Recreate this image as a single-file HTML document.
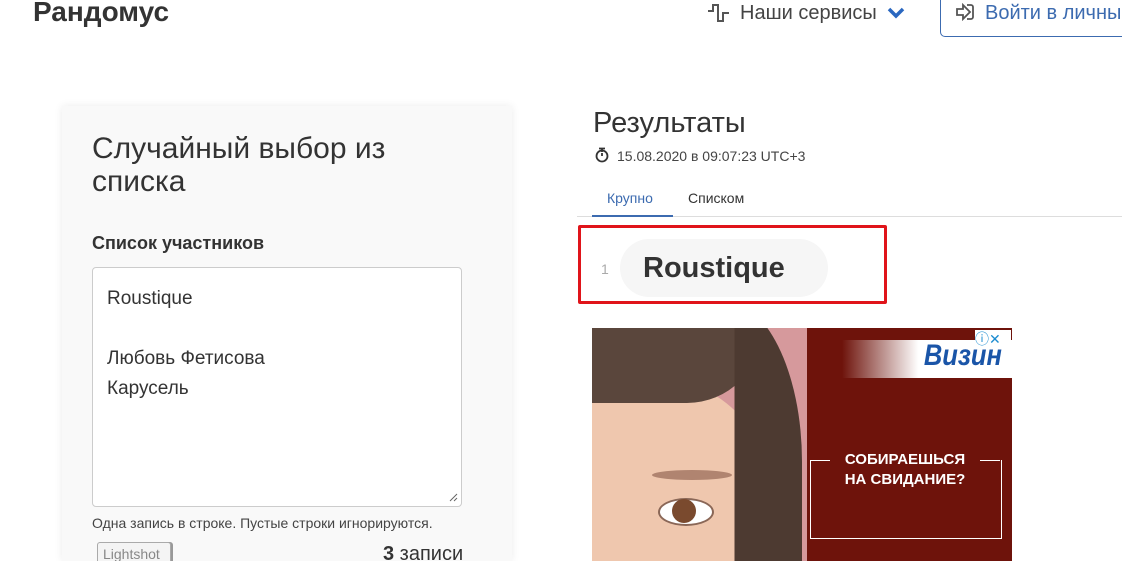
<!DOCTYPE html>
<html><head><meta charset="utf-8"><style>
html,body{margin:0;width:1122px;height:561px;overflow:hidden}
body{background:#fff;font-family:"Liberation Sans",sans-serif;color:#333;position:relative}
.a{position:absolute}
</style></head><body>
<div class="a" style="left:33px;top:-4px;font-size:28px;font-weight:bold;color:#333">Рандомус</div>
<svg class="a" style="left:707px;top:3px" width="24" height="20" viewBox="0 0 24 20"><path d="M1 8h5V2h5v16h5V10h6" fill="none" stroke="#555" stroke-width="2"/></svg>
<div class="a" style="left:740px;top:2px;font-size:20px;color:#444">Наши сервисы</div>
<svg class="a" style="left:887px;top:7px" width="18" height="12"><path d="M2 2l7 7 7-7" fill="none" stroke="#2a67c0" stroke-width="3.5"/></svg>
<div class="a" style="left:940px;top:-10px;width:200px;height:45px;border:1px solid #3c6bb0;border-radius:5px"></div>
<svg class="a" style="left:955px;top:3px" width="20" height="18"><path d="M2 6h6V2l7 7-7 7v-4H2z M12 2h4a2 2 0 0 1 2 2v10a2 2 0 0 1-2 2h-4" fill="none" stroke="#555" stroke-width="1.8"/></svg>
<div class="a" style="left:985px;top:2px;font-size:20px;color:#3c6bb0;white-space:nowrap">Войти в личный</div>

<div class="a" style="left:62px;top:106px;width:450px;height:455px;background:#f9f9f9;box-shadow:0 0 8px rgba(0,0,0,.08)"></div>
<div class="a" style="left:92px;top:132px;font-size:30px;line-height:33px;color:#333">Случайный выбор из<br>списка</div>
<div class="a" style="left:92px;top:233px;font-size:18px;font-weight:bold;color:#333">Список участников</div>
<div class="a" style="left:92px;top:267px;width:368px;height:238px;background:#fff;border:1px solid #ccc;border-radius:4px"></div>
<div class="a" style="left:107px;top:284px;font-size:19px;line-height:30px;color:#333">Roustique<br><br>Любовь Фетисова<br>Карусель</div>
<svg class="a" style="left:448px;top:492px" width="10" height="10"><path d="M9 2L2 9M9 6L6 9" stroke="#666"/></svg>
<div class="a" style="left:92px;top:515px;font-size:14px;color:#444">Одна запись в строке. Пустые строки игнорируются.</div>
<div class="a" style="left:97px;top:542px;width:72px;height:19px;border:1px solid #aaa;border-bottom:none;border-radius:3px 3px 0 0;background:#f4f4f4;box-shadow:2px 0 0 #999"></div>
<div class="a" style="left:103px;top:546px;font-size:14px;color:#888">Lightshot</div>
<div class="a" style="left:383px;top:543px;font-size:20px;color:#333"><b>3</b> записи</div>

<div class="a" style="left:593px;top:107px;font-size:29px;color:#333">Результаты</div>
<svg class="a" style="left:595px;top:147px" width="14" height="16"><circle cx="7" cy="9" r="5.5" fill="none" stroke="#333" stroke-width="1.8"/><path d="M4 1.5h6M7 2v3M7 9V6" stroke="#333" stroke-width="1.8"/></svg>
<div class="a" style="left:617px;top:148px;font-size:14px;color:#444">15.08.2020 в 09:07:23 UTC+3</div>
<div class="a" style="left:607px;top:190px;font-size:14px;color:#3c6bb0">Крупно</div>
<div class="a" style="left:688px;top:190px;font-size:14px;color:#333">Списком</div>
<div class="a" style="left:577px;top:216px;width:545px;height:1px;background:#ddd"></div>
<div class="a" style="left:592px;top:215px;width:81px;height:2px;background:#3c6bb0"></div>
<div class="a" style="left:620px;top:239px;width:208px;height:58px;border-radius:29px;background:#f6f6f6"></div>
<div class="a" style="left:578px;top:225px;width:303px;height:73px;border:3px solid #e0141a;border-radius:2px"></div>
<div class="a" style="left:601px;top:261px;font-size:14px;color:#aaa">1</div>
<div class="a" style="left:643px;top:252px;font-size:29px;font-weight:bold;color:#333">Roustique</div>

<div class="a" style="left:592px;top:328px;width:420px;height:233px;background:#6e130b;overflow:hidden">
<div class="a" style="left:0;top:0;width:215px;height:240px;background:#d6999c"></div>
<div class="a" style="left:-60px;top:50px;width:250px;height:300px;border-radius:50%;background:#efc7ae"></div>
<div class="a" style="left:0;top:0;width:170px;height:75px;background:#5a463c;border-radius:0 0 120px 0"></div>
<div class="a" style="left:60px;top:-30px;width:150px;height:300px;background:#4d3a31;border-radius:50% 60% 0 0;clip-path:inset(0 0 0 55%)"></div>
<div class="a" style="left:60px;top:142px;width:80px;height:10px;border-radius:50%;background:#b08470"></div>
<div class="a" style="left:66px;top:170px;width:52px;height:24px;border-radius:50%;background:#fff;border:2px solid #8a6757"></div>
<div class="a" style="left:80px;top:171px;width:24px;height:24px;border-radius:50%;background:#7a4a2e"></div>
<div class="a" style="left:250px;top:12px;width:170px;height:38px;background:linear-gradient(90deg,#6e130b,#fff 45%,#fff)"></div>
<div class="a" style="left:325px;top:11px;font-size:30px;font-weight:bold;font-style:italic;color:#1a55a8;transform:scaleX(.85)">Визин</div>
<div class="a" style="left:218px;top:132px;width:190px;height:78px;border:1px solid #fff;border-top:none"></div>
<div class="a" style="left:218px;top:132px;width:20px;height:1px;background:#fff"></div>
<div class="a" style="left:388px;top:132px;width:20px;height:1px;background:#fff"></div>
<div class="a" style="left:238px;top:122px;width:150px;text-align:center;font-size:15px;line-height:20px;font-weight:bold;color:#fff">СОБИРАЕШЬСЯ<br>НА СВИДАНИЕ?</div>
<div class="a" style="left:383px;top:2px;width:36px;height:18px;background:#fff;font-size:14px;color:#1a8bd0;line-height:18px">ⓘ✕</div>
</div>
</body></html>
